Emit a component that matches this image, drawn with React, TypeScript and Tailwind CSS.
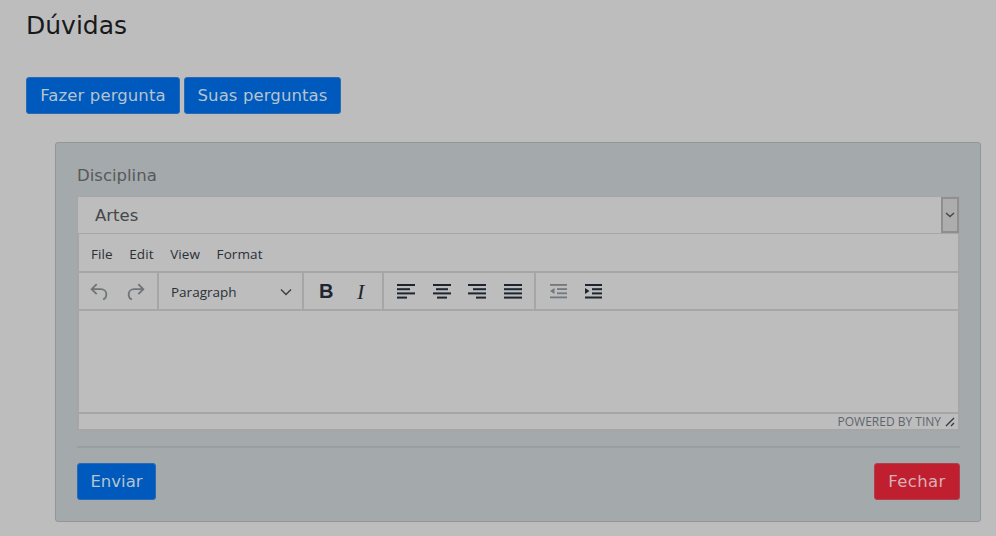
import React from "react";

const Sep = () => <div className="w-0.5 self-stretch bg-[#a6a6a6]" />;

const Lines = ({ rows }: { rows: [number, number][] }) => (
  <svg width="18" height="16" viewBox="0 0 18 16" fill="#1d2630">
    {rows.map(([x, w], i) => (
      <rect key={i} x={x} y={1 + i * 4.2} width={w} height="2" />
    ))}
  </svg>
);

const Undo = ({ flip }: { flip?: boolean }) => (
  <svg width="22" height="22" viewBox="0 0 24 24" fill="none" stroke="#6f7477" strokeWidth="2" style={flip ? { transform: "scaleX(-1)" } : undefined}>
    <path d="M9.5 4.5 4 10l5.500 5.500M4 10h10c3.500 0 6 2.400 6 5.500s-1.700 5-3.500 5.500" />
  </svg>
);

const Btn = ({ children, className }: { children: React.ReactNode; className: string }) => (
  <button className={`h-[37px] rounded-[3px] border px-0 pt-px text-[16.5px] ${className}`}>
    {children}
  </button>
);

export default function App() {
  return (
    <div className="h-[536px] w-[996px] overflow-hidden bg-[#bdbdbd] pl-[26px] pr-[15px] pt-[10px] font-['DejaVu_Sans',sans-serif]">
      <h1 className="h-[31px] text-[25px] leading-[31px] text-[#17191b]">Dúvidas</h1>
      <div className="mt-[36px] flex gap-1">
        <Btn className="w-[154px] whitespace-nowrap border-[#2a69b4] bg-[#0059bd] text-[#b5c4ce] tracking-[0.1px]">Fazer pergunta</Btn>
        <Btn className="w-[157px] whitespace-nowrap border-[#2a69b4] bg-[#0059bd] text-[#b5c4ce] tracking-[0.1px]">Suas perguntas</Btn>
      </div>
      <div className="ml-[29px] mt-[28px] h-[380px] rounded-[3px] border border-[#919699] bg-[#a4a9ab] pl-[21px] pr-[20px] pt-[21px]">
        <div className="h-[24px] text-[16.5px] leading-[24px] text-[#55595c]">Disciplina</div>
        <div className="mt-[8px] flex h-[38px] items-stretch border border-[#a6a6a6] bg-[#bdbdbd]">
          <div className="flex-1 pl-[17px] text-[16.5px] leading-[37px] text-[#43474b]">Artes</div>
          <div className="flex w-[18px] items-center justify-center border-2 border-[#8f8f8f] bg-[#adadad]">
            <svg width="10" height="6" viewBox="0 0 10 6" fill="none" stroke="#45484b" strokeWidth="1.500">
              <path d="M1 1l4 3.500L9 1" />
            </svg>
          </div>
        </div>
        <div className="h-[197px] border-2 border-t-0 border-[#a6a6a6] bg-[#bdbdbd] font-['Open_Sans',sans-serif]">
          <div className="flex h-[39px] items-center gap-[16.500px] border-b-2 border-[#a6a6a6] pl-3 pt-[3px] text-[13.5px] tracking-[0.1px] text-[#2a3138]">
            <span>File</span>
            <span>Edit</span>
            <span>View</span>
            <span>Format</span>
          </div>
          <div className="flex h-[38px] items-stretch border-b-2 border-[#a6a6a6]">
            <div className="flex w-[78px] items-center gap-[15px] pl-[9px]">
              <Undo />
              <Undo flip />
            </div>
            <Sep />
            <div className="flex w-[143px] items-center justify-between pl-3 pr-[10px] pt-0.5 text-[13.5px] text-[#2a3138]">
              <span>Paragraph</span>
              <svg width="12" height="8" viewBox="0 0 12 8" fill="none" stroke="#3b4045" strokeWidth="1.500">
                <path d="M1 1.500l5 5 5-5" />
              </svg>
            </div>
            <Sep />
            <div className="flex w-[78px] items-center pl-[15px] text-[#1d2630]">
              <span className="w-[38px] font-['Liberation_Sans',sans-serif] text-[20px] font-bold">B</span>
              <span className="font-['Liberation_Serif',serif] text-[22px] italic">I</span>
            </div>
            <Sep />
            <div className="flex w-[150px] items-center gap-[17.500px] pl-[13px]">
              <Lines rows={[[0, 18], [0, 13], [0, 18], [0, 10]]} />
              <Lines rows={[[0, 18], [3, 12], [0, 18], [4, 10]]} />
              <Lines rows={[[0, 18], [5, 13], [0, 18], [8, 10]]} />
              <Lines rows={[[0, 18], [0, 18], [0, 18], [0, 18]]} />
            </div>
            <Sep />
            <div className="flex items-center gap-[17px] pl-[13px]">
              <svg width="18" height="16" viewBox="0 0 18 16" fill="#73787c">
                <rect x="1" y="1" width="17" height="1.800" />
                <rect x="8" y="5.200" width="10" height="1.800" />
                <rect x="8" y="9.400" width="10" height="1.800" />
                <rect x="1" y="13.500" width="17" height="1.800" />
                <path d="M5.500 5v6L1 8z" />
              </svg>
              <svg width="18" height="16" viewBox="0 0 18 16" fill="#1d2630">
                <rect x="1" y="1" width="17" height="2" />
                <rect x="8" y="5.200" width="10" height="2" />
                <rect x="8" y="9.400" width="10" height="2" />
                <rect x="1" y="13.500" width="17" height="2" />
                <path d="M1 5v6l4.500-3z" />
              </svg>
            </div>
          </div>
          <div className="h-[101px]" />
          <div className="flex h-[17px] items-center justify-end border-t-2 border-[#a6a6a6] pr-[1px] text-[12px] text-[#5e666d]">
            <span>POWERED BY TINY</span>
            <svg width="14" height="14" viewBox="0 0 14 14" className="ml-[2px]" stroke="#33383d" strokeWidth="1.300">
              <path d="M3 11l8-8M8 11l3-3" />
            </svg>
          </div>
        </div>
        <div className="mt-[15px] h-0.5 bg-[#999ea0]" />
        <div className="mt-[15px] flex justify-between">
          <Btn className="w-[79px] border-[#2a69b4] bg-[#0059bd] text-[#b5c4ce]">Enviar</Btn>
          <Btn className="w-[86px] border-[#b0404e] bg-[#c01f30] text-[#d8b0b5] tracking-[0.4px]">Fechar</Btn>
        </div>
      </div>
    </div>
  );
}
